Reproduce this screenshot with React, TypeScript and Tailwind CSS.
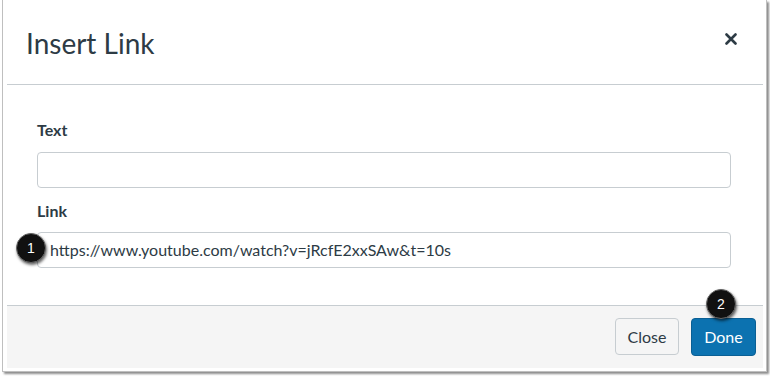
import React from "react";

function Badge({ n, className }: { n: string; className: string }) {
  return (
    <div
      className={
        "absolute w-[30px] h-[30px] rounded-full bg-[#111] border border-[#666] flex items-center justify-center text-white text-[14px] leading-none shadow-[1px_2px_3px_rgba(0,0,0,0.6)] " +
        className
      }
      style={{ fontFamily: "Arial, 'Liberation Sans', sans-serif" }}
    >
      {n}
    </div>
  );
}

export default function App() {
  return (
    <div
      className="w-[770px] h-[376px] bg-white relative overflow-hidden text-[#2d3b45]"
      style={{ fontFamily: "Lato, 'Open Sans', sans-serif" }}
    >
      <div className="ml-[2px] w-[765px] h-[372px] border-l border-r border-b border-[#bfbfbf] shadow-[2px_2px_2px_rgba(0,0,0,0.45)] pl-[4px] pr-[3px] pb-[3px] flex flex-col">
        <div className="flex-1 flex flex-col relative">
          {/* Header */}
          <div className="h-[85px] border-b border-[#c7cdd1] flex items-center justify-between pl-[19px] pr-[26px] shrink-0">
            <h1 className="text-[28px] font-normal leading-none pt-[1px]">Insert Link</h1>
            <svg width="12" height="12" viewBox="0 0 12 12" className="mt-[-6px]">
              <path d="M1.5 1.5 L10.5 10.5 M10.5 1.5 L1.5 10.5" stroke="#2d3b45" strokeWidth="2.6" strokeLinecap="round" />
            </svg>
          </div>
          {/* Body */}
          <div className="flex-1 pt-[33px] pl-[30px] pr-[32px] relative">
            <div className="text-[16px] font-bold leading-[24px] h-[24px]">Text</div>
            <div className="mt-[10px] h-[36px] border border-[#c7cdd1] rounded-[4px] bg-white" />
            <div className="mt-[11px] text-[16px] font-bold leading-[24px] h-[24px]">Link</div>
            <div className="mt-[9px] h-[36px] border border-[#c7cdd1] rounded-[4px] bg-white flex items-center pl-[12px] text-[16px]">
              https://www.youtube.com/watch?v=jRcfE2xxSAw&amp;t=10s
            </div>
          </div>
          {/* Footer */}
          <div className="h-[63px] border-t border-[#c7cdd1] bg-[#f5f5f5] flex justify-end items-start pt-[12px] pr-[7px] gap-[12px] shrink-0">
            <button className="w-[64px] h-[37px] rounded-[4px] border border-[#c7cdd1] bg-[#f5f5f5] text-[16px] text-[#2d3b45] leading-none">
              Close
            </button>
            <button className="w-[65px] h-[38px] rounded-[4px] border border-[#0a5f94] bg-[#0c72b0] text-[16px] text-white leading-none">
              Done
            </button>
          </div>
        </div>
      </div>
      <Badge n="1" className="left-[16px] top-[233px]" />
      <Badge n="2" className="left-[706px] top-[289px]" />
    </div>
  );
}
